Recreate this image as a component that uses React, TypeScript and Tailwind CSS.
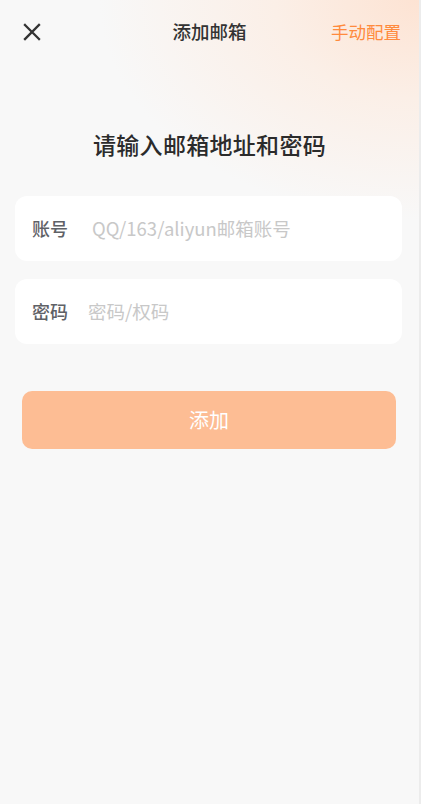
import React from "react";

export default function App() {
  return (
    <div
      className="relative w-[421px] h-[804px] overflow-hidden bg-[#f8f8f8] border-r-2 border-[#ececec]"
      style={{ fontFamily: '"Noto Sans CJK SC", "Noto Sans", Roboto, sans-serif' }}
    >
      <div className="absolute inset-0 bg-[radial-gradient(ellipse_320px_220px_at_100%_0%,#fde3d3_0%,#fbefe7_45%,rgba(248,248,248,0)_100%)]" />
      <div className="relative flex flex-col">
        <div className="flex items-center justify-between h-[64px] pl-[23px] pr-[18px]">
          <svg width="18" height="18" viewBox="0 0 18 18" className="text-[#333]">
            <path d="M2 2L16 16M16 2L2 16" stroke="currentColor" strokeWidth="2.3" strokeLinecap="square" />
          </svg>
          <div className="absolute left-0 right-0 text-center text-[18.5px] font-medium text-[#333] pointer-events-none">
            添加邮箱
          </div>
          <div className="text-[17.5px] text-[#ff8a3d]">手动配置</div>
        </div>
        <div className="mt-[65px] text-center text-[23px] font-medium text-[#2b2b2b] tracking-[0.3px] leading-[30px]">
          请输入邮箱地址和密码
        </div>
        <div className="mt-[37px] ml-[15px] mr-[17px] flex flex-col gap-[18px]">
          <div className="h-[65px] rounded-[12px] bg-white flex items-center pl-[17px]">
            <span className="text-[18px] font-medium text-[#5f6166] w-[60px]">账号</span>
            <span className="text-[18.5px] text-[#c8c8c8]">QQ/163/aliyun邮箱账号</span>
          </div>
          <div className="h-[65px] rounded-[12px] bg-white flex items-center pl-[17px]">
            <span className="text-[18px] font-medium text-[#5f6166] w-[56px]">密码</span>
            <span className="text-[18.5px] text-[#c8c8c8]">密码/权码</span>
          </div>
        </div>
        <div className="mt-[47px] ml-[22px] mr-[23px] h-[58px] rounded-[10px] bg-[#fdbd94] flex items-center justify-center text-white text-[20px]">
          添加
        </div>
      </div>
    </div>
  );
}
